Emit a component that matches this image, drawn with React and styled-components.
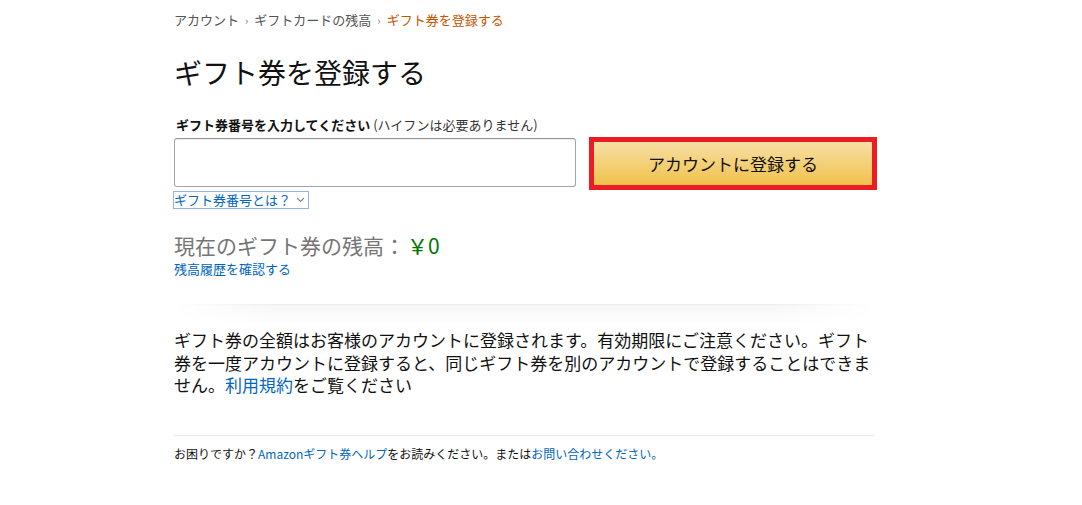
import React from "react";
import styled, { createGlobalStyle } from "styled-components";

const GlobalStyle = createGlobalStyle`
  body {
    margin: 0;
    background: #fff;
    font-family: "Noto Sans CJK JP", "Noto Sans", sans-serif;
    color: #111;
  }
`;

const Page = styled.div`
  width: 700px;
  padding-left: 174px;
  display: flex;
  flex-direction: column;
`;

const Breadcrumb = styled.div`
  margin-top: 11px;
  font-size: 13px;
  line-height: 18px;
  color: #555;
  display: flex;
  align-items: center;
  gap: 6px;
`;

const Crumb = styled.span`
  color: ${(p) => (p.$active ? "#c45500" : "#555")};
`;

const Sep = styled.span`
  color: #777;
  font-size: 11px;
`;

const Title = styled.h1`
  margin: 25px 0 0;
  font-size: 28px;
  font-weight: 400;
  line-height: 36px;
  color: #111;
`;

const Label = styled.div`
  margin-top: 26px;
  padding-left: 2px;
  font-size: 13px;
  line-height: 18px;
  font-weight: 700;
  color: #111;

  span {
    font-weight: 400;
    color: #333;
  }
`;

const Row = styled.div`
  margin-top: 3px;
  display: flex;
  align-items: flex-start;
`;

const Input = styled.div`
  flex-shrink: 0;
  margin-top: 1px;
  width: 400px;
  height: 47px;
  border: 1px solid #a6a6a6;
  border-top-color: #949494;
  border-radius: 3px;
  box-shadow: 0 1px 0 rgba(0, 0, 0, 0.07) inset;
`;

const Highlight = styled.div`
  flex-shrink: 0;
  margin-left: 13px;
  border: 5px solid #ec1c24;
`;

const Button = styled.div`
  width: 278px;
  height: 43px;
  display: flex;
  align-items: center;
  justify-content: center;
  background: linear-gradient(to bottom, #f7dfa5, #f0c14b);
  font-size: 17px;
  color: #111;
`;

const WhatLink = styled.div`
  align-self: flex-start;
  margin-top: 1px;
  margin-left: -1px;
  padding: 0 3px 0 0;
  border: 1px solid #8fb3ea;
  font-size: 13px;
  line-height: 16px;
  color: #0066c0;
  display: flex;
  align-items: center;
  gap: 5px;
`;

const Balance = styled.div`
  margin-top: 22px;
  font-size: 21px;
  line-height: 28px;
  color: #767676;
`;

const Amount = styled.span`
  color: #007600;
  margin-left: 2px;
`;

const Link = styled.a`
  color: #0066c0;
  text-decoration: none;
`;

const SmallLink = styled(Link)`
  font-size: 13px;
  line-height: 17px;
  margin-top: 1px;
`;

const Shadow = styled.div`
  margin-top: 27px;
  height: 20px;
  background: linear-gradient(to bottom, rgba(0, 0, 0, 0.08) 0, rgba(0, 0, 0, 0.03) 2px, rgba(0, 0, 0, 0.015) 60%, rgba(0, 0, 0, 0) 100%);
  mask-image: linear-gradient(to right, transparent 0, #000 14%, #000 86%, transparent 100%);
  -webkit-mask-image: linear-gradient(to right, transparent 0, #000 14%, #000 86%, transparent 100%);
`;

const Paragraph = styled.p`
  margin: 5px 0 0;
  font-size: 17px;
  line-height: 22.5px;
  color: #111;
`;

const Rule = styled.hr`
  margin: 38px 0 0;
  border: 0;
  border-top: 1px solid #e7e7e7;
`;

const Footer = styled.div`
  margin-top: 10px;
  font-size: 12px;
  line-height: 16px;
  color: #111;
`;

function Chevron() {
  return (
    <svg width="9" height="6" viewBox="0 0 9 6">
      <path d="M1 1l3.5 3.5L8 1" fill="none" stroke="#888" strokeWidth="1.2" />
    </svg>
  );
}

export default function App() {
  return (
    <>
      <GlobalStyle />
      <Page>
        <Breadcrumb>
          <Crumb>アカウント</Crumb>
          <Sep>›</Sep>
          <Crumb>ギフトカードの残高</Crumb>
          <Sep>›</Sep>
          <Crumb $active>ギフト券を登録する</Crumb>
        </Breadcrumb>
        <Title>ギフト券を登録する</Title>
        <Label>
          ギフト券番号を入力してください <span>(ハイフンは必要ありません)</span>
        </Label>
        <Row>
          <Input />
          <Highlight>
            <Button>アカウントに登録する</Button>
          </Highlight>
        </Row>
        <WhatLink>
          ギフト券番号とは？
          <Chevron />
        </WhatLink>
        <Balance>
          現在のギフト券の残高：<Amount>￥0</Amount>
        </Balance>
        <SmallLink href="#">残高履歴を確認する</SmallLink>
        <Shadow />
        <Paragraph>
          ギフト券の全額はお客様のアカウントに登録されます。有効期限にご注意ください。ギフト券を一度アカウントに登録すると、同じギフト券を別のアカウントで登録することはできません。
          <Link href="#">利用規約</Link>をご覧ください
        </Paragraph>
        <Rule />
        <Footer>
          お困りですか？<Link href="#">Amazonギフト券ヘルプ</Link>をお読みください。または
          <Link href="#">お問い合わせください。</Link>
        </Footer>
      </Page>
    </>
  );
}
